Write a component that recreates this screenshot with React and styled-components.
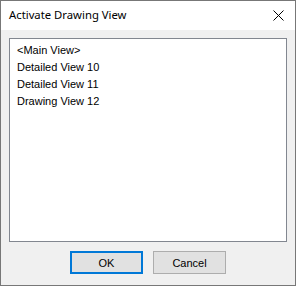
import React from "react";
import styled, { createGlobalStyle } from "styled-components";

const Global = createGlobalStyle`
  html, body { margin: 0; padding: 0; background: #f0f0f0; }
  * { box-sizing: border-box; }
`;

const Window = styled.div`
  width: 296px;
  height: 286px;
  border: 1px solid #777777;
  background: #f0f0f0;
  display: flex;
  flex-direction: column;
  font-family: "Liberation Sans", Arial, sans-serif;
  font-size: 11px;
  color: #000;
`;

const TitleBar = styled.div`
  height: 29px;
  background: #ffffff;
  display: flex;
  align-items: center;
  justify-content: space-between;
  padding: 0 0 0 8px;
`;

const Title = styled.span`
  font-family: "Noto Sans", "Open Sans", sans-serif;
  font-size: 11.3px;
  line-height: 16px;
  padding-bottom: 1px;
`;

const CloseBox = styled.div`
  width: 46px;
  height: 29px;
  display: flex;
  align-items: center;
  justify-content: center;
  margin-right: -6px;
`;

const Body = styled.div`
  flex: 1;
  display: flex;
  flex-direction: column;
  padding: 8px 8px 11px 8px;
`;

const ListBox = styled.div`
  height: 204px;
  background: #ffffff;
  border: 1px solid #828790;
  padding: 3px 0 0 7px;
  display: flex;
  flex-direction: column;
`;

const Item = styled.div`
  height: 17px;
  line-height: 17px;
  white-space: nowrap;
`;

const ButtonRow = styled.div`
  margin-top: 9px;
  display: flex;
  gap: 10px;
  padding-left: 61px;
`;

const Button = styled.button`
  width: 73px;
  height: 23px;
  padding: 0;
  margin: 0;
  background: #e1e1e1;
  border: ${(p) => (p.$default ? "2px solid #0078d7" : "1px solid #adadad")};
  font-family: inherit;
  font-size: 11px;
  color: #000;
  display: flex;
  align-items: center;
  justify-content: center;
`;

export default function App() {
  const items = ["<Main View>", "Detailed View 10", "Detailed View 11", "Drawing View 12"];
  return (
    <>
      <Global />
      <Window>
        <TitleBar>
          <Title>Activate Drawing View</Title>
          <CloseBox>
            <svg width="11" height="11" viewBox="0 0 11 11">
              <path d="M0.5 0.5 L10.5 10.5 M10.5 0.5 L0.5 10.5" stroke="#000" strokeWidth="1" fill="none" />
            </svg>
          </CloseBox>
        </TitleBar>
        <Body>
          <ListBox>
            {items.map((t) => (
              <Item key={t}>{t}</Item>
            ))}
          </ListBox>
          <ButtonRow>
            <Button $default>OK</Button>
            <Button>Cancel</Button>
          </ButtonRow>
        </Body>
      </Window>
    </>
  );
}
